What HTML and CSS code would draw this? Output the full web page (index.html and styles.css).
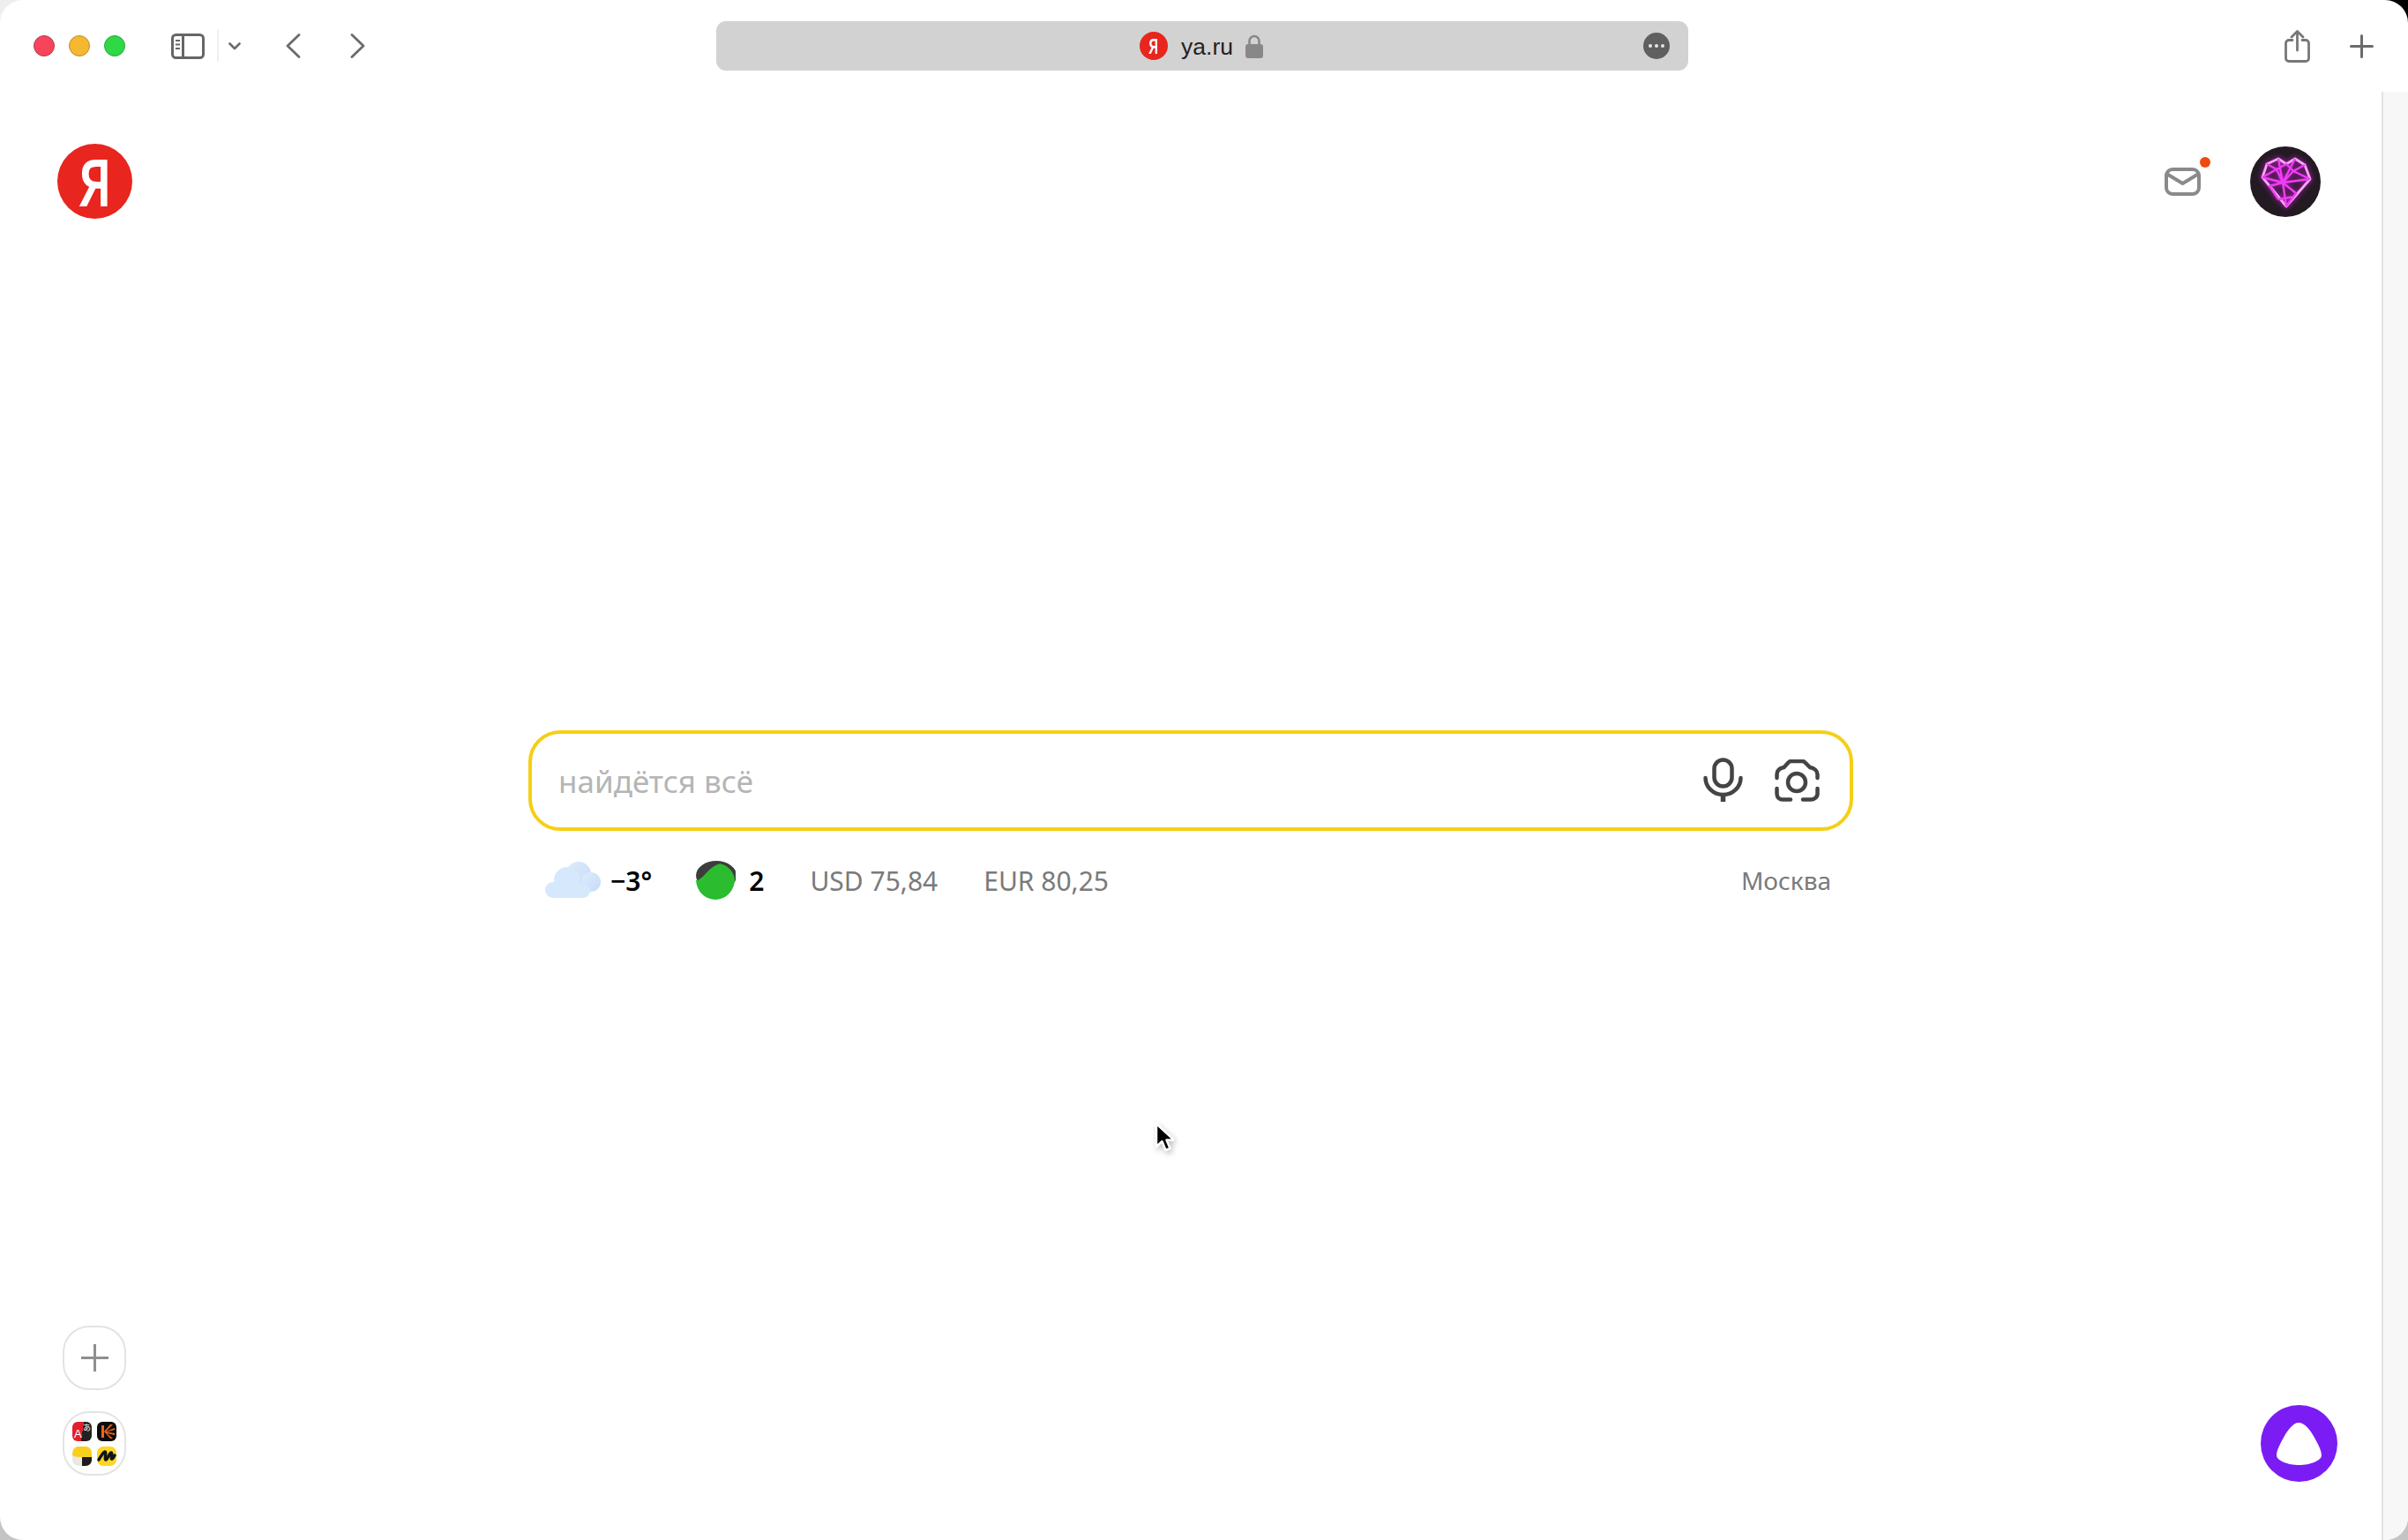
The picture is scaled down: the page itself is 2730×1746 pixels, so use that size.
FILE: index.html
```html
<!DOCTYPE html>
<html lang="ru">
<head>
  <meta charset="UTF-8" />
  <meta name="viewport" content="width=device-width, initial-scale=1" />
  <title>Яндекс</title>
  <link rel="stylesheet" href="styles.css">
</head>
<body>
  <div class="window">
    <header class="toolbar">
      <div class="lights">
        <span class="light light-red"></span>
        <span class="light light-yellow"></span>
        <span class="light light-green"></span>
      </div>
      <div class="nav">
        <svg class="tb-sidebar" width="38" height="29" viewBox="0 0 38 29" fill="none" stroke="#666" stroke-width="3">
          <rect x="1.5" y="1.5" width="35" height="26" rx="4" />
          <path d="M13.5 2v25" />
          <path d="M5 8h5M5 12.500h5M5 17h5" stroke-width="2" />
        </svg>
        <span class="tb-divider"></span>
        <svg class="tb-chevron" width="14" height="9" viewBox="0 0 14 9" fill="none" stroke="#6b6b6b" stroke-width="2.600" stroke-linecap="round" stroke-linejoin="round">
          <path d="M1.500 1.500L7 7l5.500-5.500" />
        </svg>
        <svg class="tb-back" width="17" height="28" viewBox="0 0 17 28" fill="none" stroke="#6b6b6b" stroke-width="2.800" stroke-linecap="round" stroke-linejoin="round">
          <path d="M15 1.500L2 14l13 12.500" />
        </svg>
        <svg class="tb-forward" width="17" height="28" viewBox="0 0 17 28" fill="none" stroke="#6b6b6b" stroke-width="2.800" stroke-linecap="round" stroke-linejoin="round">
          <path d="M2 1.500L15 14 2 26.500" />
        </svg>
      </div>
      <div class="address">
        <div class="address-site">
          <span class="favicon"><span class="ya-letter">Я</span></span>
          <span class="address-text">ya.ru</span>
          <svg class="lock" width="20" height="27" viewBox="0 0 20 27" fill="none">
            <path d="M4.500 12V7.500a5.500 5.500 0 0 1 11 0V12" stroke="#888" stroke-width="2.600" />
            <rect y="11" width="20" height="16" rx="3" fill="#888" />
          </svg>
        </div>
        <span class="address-more"><i></i><i></i><i></i></span>
      </div>
      <div class="actions">
        <svg width="29" height="37" viewBox="0 0 29 37" fill="none" stroke="#777" stroke-width="2.800" stroke-linecap="round" stroke-linejoin="round">
          <path d="M9 11.500H5A3.500 3.500 0 0 0 1.500 15v17A3.500 3.500 0 0 0 5 35.500h19a3.500 3.500 0 0 0 3.500-3.500V15a3.500 3.500 0 0 0-3.500-3.500h-4" />
          <path d="M14.500 23V2M8 8l6.500-6.500L21 8" />
        </svg>
        <svg width="27" height="27" viewBox="0 0 27 27" fill="none" stroke="#6b6b6b" stroke-width="3" stroke-linecap="round">
          <path d="M13.500 1.500v24M1.500 13.500h24" />
        </svg>
      </div>
    </header>

    <div class="content">
      <main class="page">
        <div class="top-row">
          <a class="logo"><span class="ya-letter">Я</span></a>
          <div class="user">
            <span class="mail">
              <svg width="41" height="32" viewBox="0 0 41 32" fill="none" stroke="#8a8a8a" stroke-width="4" stroke-linecap="round" stroke-linejoin="round">
                <rect x="2" y="2" width="37" height="28" rx="7" />
                <path d="M4 8l16.500 10L37 8" />
              </svg>
              <span class="mail-dot"></span>
            </span>
            <svg class="avatar" width="80" height="80" viewBox="0 0 80 80" fill="none">
              <circle cx="40" cy="40" r="40" fill="#231a22" />
              <g class="avatar-heart" stroke="#f03cf5" stroke-width="2.400" stroke-linejoin="round">
                <path d="M19 20L32 14 41 20 51 14 62 21 68 37 41 68 14 35Z" stroke="#f7a6f8" stroke-width="2.800" />
                <path d="M14 35L37 41 68 37M32 14L37 41 51 14M19 20L30 26 41 20 49 28 62 21M14 35L30 26 37 41 49 28 68 37" />
                <path d="M37 41L41 68M37 41L22 45 32 60M37 41L52 53 41 68M32 60L50 57" />
              </g>
            </svg>
          </div>
        </div>

        <section class="search-block">
          <form class="search">
            <input class="search-input" type="text" placeholder="найдётся всё" />
            <svg width="46" height="52" viewBox="0 0 46 52" fill="none" stroke="#444" stroke-width="4.500" stroke-linecap="round">
              <rect x="12.500" y="2.500" width="20" height="30" rx="10" />
              <path d="M2.500 23a20 19 0 0 0 40 0" />
              <path d="M22.500 42v8" stroke-width="5.500" stroke-linecap="butt" />
            </svg>
            <svg width="51" height="48" viewBox="0 0 51 48" fill="none" stroke="#444" stroke-width="4.500" stroke-linecap="round" stroke-linejoin="round">
              <path d="M2.500 21v-4c0-4 3-7 8-8l5-5.500c1-1 2-1.500 3-1.500h13c1 0 2 .5 3 1.500L40 9c5 1 8.500 4 8.500 8v4" />
              <path d="M2.500 33v6c0 4 3 6.500 6.500 6.500h9M32 45.500h9c3.500 0 7.500-2.500 7.500-6.500v-6" />
              <circle cx="25" cy="26" r="10" />
            </svg>
          </form>
          <div class="informers">
            <span class="informer informer-strong">
              <svg width="64" height="44" viewBox="0 0 64 44">
                <defs>
                  <linearGradient id="cloud-back" x1="0" y1="0" x2="1" y2="1">
                    <stop offset="0" stop-color="#deecfc" />
                    <stop offset="1" stop-color="#c6dbf8" />
                  </linearGradient>
                </defs>
                <g fill="url(#cloud-back)">
                  <circle cx="38" cy="15" r="14" />
                  <circle cx="52" cy="24" r="11" />
                </g>
                <g fill="#d6e8fc">
                  <circle cx="25" cy="22" r="15" />
                  <circle cx="9" cy="33" r="9" />
                  <circle cx="43" cy="34" r="8" />
                  <rect x="7" y="28" width="38" height="14" rx="5" />
                </g>
              </svg>
              −3°
            </span>
            <span class="informer informer-strong informer-traffic">
              <svg width="46" height="46" viewBox="0 0 44 44">
                <ellipse cx="23" cy="17" rx="22" ry="16" fill="#3d3d3d" />
                <path d="M1 22C9 22 14 7 27 4 34 5 41 11 43 20A21 22 0 1 1 1 22Z" fill="#2bbd2f" />
              </svg>
              2
            </span>
            <span class="informer">USD 75,84</span>
            <span class="informer">EUR 80,25</span>
            <span class="informer informer-city">Москва</span>
          </div>
        </section>

        <div class="bottom-row">
          <div class="side-buttons">
            <button class="side-button" type="button">
              <svg width="31" height="31" viewBox="0 0 31 31" fill="none" stroke="#8f8f8f" stroke-width="3">
                <path d="M15.500 0v31M0 15.500h31" />
              </svg>
            </button>
            <button class="side-button app-grid" type="button">
              <span class="app app-translate"><b>A</b><i>あ</i></span>
              <svg class="app" width="22" height="22" viewBox="0 0 22 22">
                <rect width="22" height="22" rx="6" fill="#0c0c0c" />
                <path d="M5 4h3v14H5z" fill="#f0641e" />
                <path d="M8 11L15 3h3L10 11l10-4v2L11 11.500 20 13v2l-9-2 7 6h-3z" fill="#f0641e" />
              </svg>
              <svg class="app" width="22" height="22" viewBox="0 0 22 22">
                <rect width="22" height="22" rx="7" fill="#ebe8e0" />
                <path d="M11 22h4c4 0 7-3 7-7v-3H11z" fill="#1c1c1c" />
                <path d="M0 10C0 3 3 0 8 0h6c5 0 8 3 8 8v4H8C5 12 2 11 0 10z" fill="#f8cf1c" />
              </svg>
              <svg class="app" width="22" height="22" viewBox="0 0 22 22" fill="none">
                <rect width="22" height="22" rx="7" fill="#fbd725" />
                <path d="M2 15C4 12 7 6 9 6c2 0-1 9 1 9 2 0 4-8 6-8s-1 8 1 7c1 0 2-2 3-4" stroke="#141414" stroke-width="3.400" stroke-linecap="round" stroke-linejoin="round" />
              </svg>
            </button>
          </div>
          <a class="alice">
            <svg width="51" height="48" viewBox="0 0 51 48">
              <path d="M25 0C32 0 38 8 43 17 47 24 51 32 51 37 51 43 38 48 25.500 48 13 48 0 43 0 37 0 31 5 22 9 15 13 8 19 0 25 0Z" fill="#fff" />
            </svg>
          </a>
        </div>
      </main>
      <div class="scrollbar"></div>
    </div>

    <svg class="cursor" width="22" height="34" viewBox="0 0 22 34">
      <path d="M2 2v26l6.500-6 4 10 5-2-4-9.500H22z" fill="#000" stroke="#fff" stroke-width="2.500" stroke-linejoin="round" />
    </svg>
  </div>
</body>
</html>
```

FILE: styles.css
```css
html, body {
  margin: 0;
  padding: 0;
}

body {
  width: 2730px;
  height: 1746px;
  overflow: hidden;
  font-family: "Noto Sans", "Liberation Sans", sans-serif;
  background-color: #c4c4c4;
  background-image: linear-gradient(#000, #000), linear-gradient(#eee, #eee);
  background-size: 40px 40px, 40px 40px;
  background-position: top right, top left;
  background-repeat: no-repeat;
}

.window {
  position: relative;
  display: flex;
  flex-direction: column;
  height: 1746px;
  background: #fff;
  border-radius: 26px;
  overflow: hidden;
}

/* browser toolbar */
.toolbar {
  flex: none;
  display: flex;
  align-items: center;
  height: 104px;
  padding: 0 39px 0 38px;
}

.lights {
  display: flex;
  gap: 16px;
}

.light {
  width: 24px;
  height: 24px;
  border-radius: 50%;
  box-sizing: border-box;
  border: 1px solid;
}

.light-red {
  background: #f6455a;
  border-color: #b8394a;
}

.light-yellow {
  background: #f6b731;
  border-color: #c08d2a;
}

.light-green {
  background: #2fd845;
  border-color: #27a93a;
}

.nav {
  display: flex;
  align-items: center;
  margin-left: 52px;
}

.tb-divider {
  width: 2px;
  height: 36px;
  margin-left: 14px;
  background: #efefef;
}

.tb-chevron {
  margin-left: 11px;
}

.tb-back {
  margin-left: 51px;
}

.tb-forward {
  margin-left: 56px;
}

.address {
  display: grid;
  grid-template-columns: 1fr auto 1fr;
  align-items: center;
  width: 1102px;
  height: 56px;
  margin-left: 398px;
  padding: 0 21px 0 19px;
  box-sizing: border-box;
  background: #d2d2d2;
  border-radius: 11px;
}

.address-site {
  grid-column: 2;
  display: flex;
  align-items: center;
}

.favicon {
  display: flex;
  align-items: center;
  justify-content: center;
  width: 32px;
  height: 32px;
  border-radius: 50%;
  background: #e8251e;
  color: #fff;
  font-size: 23px;
}

.ya-letter {
  display: block;
  font-weight: 600;
  line-height: 1;
  transform: scaleX(0.78);
}

.address-text {
  margin-left: 15px;
  padding-top: 2px;
  font-family: "Liberation Sans", sans-serif;
  font-size: 26.500px;
  color: #222;
}

.lock {
  margin-left: 14px;
}

.address-more {
  grid-column: 3;
  justify-self: end;
  display: flex;
  align-items: center;
  justify-content: center;
  gap: 3px;
  width: 30px;
  height: 30px;
  border-radius: 50%;
  background: #5f5f5f;
}

.address-more i {
  width: 4px;
  height: 4px;
  border-radius: 50%;
  background: #e6e6e6;
}

.actions {
  display: flex;
  align-items: center;
  gap: 45px;
  margin-left: auto;
}

/* page */
.content {
  flex: 1;
  display: flex;
  min-height: 0;
}

.page {
  flex: 1;
  display: flex;
  flex-direction: column;
}

.scrollbar {
  flex: none;
  width: 30px;
  box-sizing: border-box;
  background: #f7f7f7;
  border-left: 2px solid #e2e2e2;
}

.top-row {
  display: flex;
  align-items: center;
  justify-content: space-between;
  padding: 59px 69px 0 65px;
}

.logo {
  display: flex;
  align-items: center;
  justify-content: center;
  width: 85px;
  height: 85px;
  border-radius: 50%;
  background: #e8251e;
  color: #fff;
  font-size: 74px;
}

.user {
  display: flex;
  align-items: center;
  gap: 56px;
}

.mail {
  position: relative;
  display: block;
  height: 32px;
}

.mail-dot {
  position: absolute;
  top: -12px;
  right: -11px;
  width: 12px;
  height: 12px;
  border-radius: 50%;
  background: #ee4a10;
}

.avatar-heart {
  filter: drop-shadow(0 0 3px #c81fd0);
}

.search-block {
  align-self: center;
  width: 1502px;
  margin-top: 580px;
}

.search {
  display: flex;
  align-items: center;
  height: 114px;
  margin: 0;
  padding: 0 34px 0 30px;
  box-sizing: border-box;
  background: #fff;
  border: 4px solid #f5cf14;
  border-radius: 36px;
}

.search svg:last-child {
  margin-left: 35px;
}

.search-input {
  flex: 1;
  min-width: 0;
  padding: 0;
  border: none;
  outline: none;
  background: transparent;
  font-family: inherit;
  font-size: 35px;
}

.search-input::placeholder {
  color: #b5b5b5;
  opacity: 1;
}

.informers {
  display: flex;
  align-items: center;
  gap: 52px;
  height: 44px;
  margin-top: 34px;
  padding: 0 25px 0 19px;
  font-size: 30px;
  color: #7a7a7a;
}

.informer {
  display: flex;
  align-items: center;
  gap: 10px;
}

.informer-strong {
  color: #000;
  font-weight: 600;
}

.informer-traffic {
  gap: 15px;
  margin-left: -3px;
}

.informer-city {
  margin-left: auto;
  font-size: 28px;
}

.bottom-row {
  display: flex;
  align-items: flex-end;
  justify-content: space-between;
  margin-top: auto;
  padding: 0 50px 66px 71px;
}

.side-buttons {
  display: flex;
  flex-direction: column;
  gap: 24px;
  margin-bottom: 7px;
}

.side-button {
  display: flex;
  align-items: center;
  justify-content: center;
  width: 72px;
  height: 73px;
  padding: 0;
  background: #fff;
  border: 2px solid #e3e3e3;
  border-radius: 30px;
}

.app-grid {
  display: grid;
  grid-template-columns: 22px 22px;
  grid-template-rows: 22px 22px;
  gap: 6px;
  align-content: center;
  justify-content: center;
}

.app {
  display: block;
}

.app-translate {
  position: relative;
  width: 22px;
  height: 22px;
  overflow: hidden;
  border-radius: 6px;
  background: linear-gradient(100deg, #e2202c 52%, #222 52%);
  color: #fff;
}

.app-translate b {
  position: absolute;
  left: 2px;
  bottom: 1px;
  font-size: 13px;
  font-weight: 500;
  line-height: 14px;
}

.app-translate i {
  position: absolute;
  right: 1px;
  top: 1px;
  font-family: "Noto Sans CJK JP", sans-serif;
  font-size: 9px;
  font-style: normal;
  line-height: 11px;
}

.alice {
  display: flex;
  align-items: center;
  justify-content: center;
  width: 87px;
  height: 87px;
  border-radius: 50%;
  background: #7b1cf5;
}

/* mouse pointer, over the page */
.cursor {
  position: absolute;
  left: 1309px;
  top: 1272px;
  filter: drop-shadow(2px 3px 3px rgba(0, 0, 0, 0.25));
}
```
